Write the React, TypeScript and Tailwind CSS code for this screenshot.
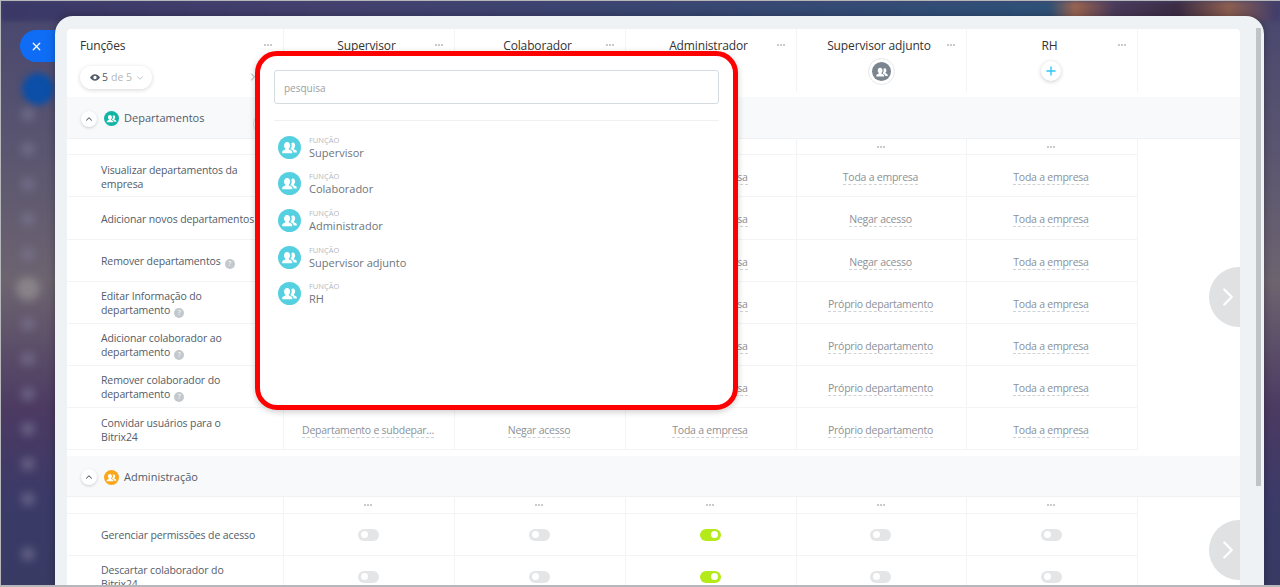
import React from "react";
import { ChevronDown, ChevronRight, ChevronUp, Plus, X } from "lucide-react";

const roles = ["Supervisor", "Colaborador", "Administrador", "Supervisor adjunto", "RH"];
const gridCols = "grid-cols-[217px_171px_171px_171px_170px_171px]";

type Row = { label: string[]; help?: boolean; h?: string; values: string[] };

const deptRows: Row[] = [
  { label: ["Visualizar departamentos da", "empresa"], values: ["Toda a empresa", "Toda a empresa", "Toda a empresa", "Toda a empresa", "Toda a empresa"] },
  { label: ["Adicionar novos departamentos"], h: "h-[43px]", values: ["Negar acesso", "Negar acesso", "Toda a empresa", "Negar acesso", "Toda a empresa"] },
  { label: ["Remover departamentos"], help: true, values: ["Negar acesso", "Negar acesso", "Toda a empresa", "Negar acesso", "Toda a empresa"] },
  { label: ["Editar Informação do", "departamento"], help: true, values: ["Negar acesso", "Negar acesso", "Toda a empresa", "Próprio departamento", "Toda a empresa"] },
  { label: ["Adicionar colaborador ao", "departamento"], help: true, values: ["Negar acesso", "Negar acesso", "Toda a empresa", "Próprio departamento", "Toda a empresa"] },
  { label: ["Remover colaborador do", "departamento"], help: true, values: ["Negar acesso", "Negar acesso", "Toda a empresa", "Próprio departamento", "Toda a empresa"] },
  { label: ["Convidar usuários para o", "Bitrix24"], values: ["Departamento e subdepar...", "Negar acesso", "Toda a empresa", "Próprio departamento", "Toda a empresa"] },
];

const adminRows = [
  { label: ["Gerenciar permissões de acesso"], toggles: [false, false, true, false, false] },
  { label: ["Descartar colaborador do", "Bitrix24"], toggles: [false, false, true, false, false] },
];

function UsersIcon({ className }: { className?: string }) {
  return (
    <svg viewBox="0 0 24 24" className={className} fill="white">
      <path d="M9.500 6.200c1.900 0 3.200 1.600 3.200 3.700 0 1.400-.6 2.600-1.400 3.200v1.100c1.900.6 3.600 1.400 3.600 2.500v1.300H4.400v-1.300c0-1.100 1.400-1.900 3.300-2.500v-1.100c-.9-.6-1.400-1.800-1.400-3.200 0-2.100 1.300-3.700 3.200-3.700z" />
      <path d="M15 6.600c1.700 0 2.900 1.400 2.900 3.300 0 1.200-.5 2.300-1.300 2.900v1c1.700.5 3 1.200 3 2.200v1.300h-3.200c0-1.600-1.400-2.700-3.400-3.400v-.7c.8-.7 1.300-1.900 1.300-3.300 0-.9-.2-1.700-.6-2.300.4 0 .9 0 1.300 0z" />
    </svg>
  );
}

function EyeIcon() {
  return (
    <svg viewBox="0 0 12 8" className="w-[10px] h-[7px] mr-[2px]" fill="#535c69">
      <path fillRule="evenodd" d="M6 0c2.600 0 4.700 1.800 6 4-1.300 2.200-3.400 4-6 4S1.300 6.200 0 4c1.300-2.200 3.400-4 6-4zm0 2a2 2 0 1 0 0 4 2 2 0 0 0 0-4z" />
    </svg>
  );
}

function Dots() {
  return (
    <span className="flex gap-[1px]">
      <i className="w-[2px] h-[2px] rounded-full bg-[#b4bac0]" />
      <i className="w-[2px] h-[2px] rounded-full bg-[#b4bac0]" />
      <i className="w-[2px] h-[2px] rounded-full bg-[#b4bac0]" />
    </span>
  );
}

function Help() {
  return (
    <span className="inline-flex items-center justify-center ml-[4px] w-[10px] h-[10px] rounded-full bg-[#c3c8cc] text-white text-[7px] leading-none align-[-1px]">
      ?
    </span>
  );
}

function Toggle({ on }: { on: boolean }) {
  return (
    <span className={`flex items-center w-[21px] h-[12px] rounded-full px-[3px] ${on ? "bg-[#b5ea1a] justify-end" : "bg-[#e3e5e7] justify-start"}`}>
      <i className="w-[7px] h-[7px] rounded-full bg-white" />
    </span>
  );
}

function GroupHeader({ title, color, h }: { title: string; color: string; h: string }) {
  return (
    <div className={`flex items-center ${h} pl-[14px] pt-[2px] bg-[#f7f9fa] border-b border-[#eff1f3]`}>
      <span className="flex items-center justify-center w-[16px] h-[16px] rounded-full bg-white shadow-[0_1px_3px_rgba(0,0,0,0.18)]">
        <ChevronUp size={10} strokeWidth={2.5} className="text-[#535c69]" />
      </span>
      <span className={`flex items-center justify-center ml-[7px] w-[15px] h-[15px] rounded-full ${color}`}>
        <UsersIcon className="w-[15px] h-[15px]" />
      </span>
      <span className="ml-[5px] text-[11px] text-[#535c69]">{title}</span>
    </div>
  );
}

function DotsRow({ h }: { h: string }) {
  return (
    <div className={`grid ${gridCols} ${h}`}>
      <div className="border-b border-r border-[#f2f4f6]" />
      {roles.map((r) => (
        <div key={r} className="flex items-center justify-center pr-[2px] border-b border-r border-[#f2f4f6]">
          <Dots />
        </div>
      ))}
    </div>
  );
}

function LabelCell({ label, help, shift }: { label: string[]; help?: boolean; shift?: boolean }) {
  return (
    <div className={`flex items-center pl-[34px] border-b border-r border-[#f2f4f6] ${shift ? "pt-[2px]" : ""}`}>
      <p className="text-[10.500px] tracking-[-0.12px] leading-[14px] text-[#535c69] whitespace-nowrap">
        {label.map((l, i) => (
          <span key={l} className="block">
            {l}
            {help && i === label.length - 1 && <Help />}
          </span>
        ))}
      </p>
    </div>
  );
}

function Header() {
  return (
    <div className={`grid ${gridCols} h-[68px]`}>
      <div className="relative h-[63px] pl-[13px] pt-[8px] border-r border-[#f2f4f6]">
        <p className="text-[12px] tracking-[-0.14px] leading-[18px] text-[#333]">Funções</p>
        <span className="mt-[11px] flex items-center w-[72px] h-[23px] pl-[10px] rounded-full bg-white shadow-[0_1px_4px_rgba(0,0,0,0.16)] text-[10.500px] text-[#b3b8bd]">
          <EyeIcon />
          <span className="text-[#535c69] mr-[3px]">5</span>
          de 5
          <ChevronDown size={10} className="ml-[3px]" />
        </span>
        <span className="absolute right-[11px] top-[15px]"><Dots /></span>
        <ChevronRight size={12} className="absolute right-[24px] top-[42px] text-[#9aa1a8]" />
      </div>
      {roles.map((r, i) => (
        <div key={r} className="relative flex flex-col items-center h-[63px] pt-[8px] pr-[5px] border-r border-[#f2f4f6]">
          <p className="text-[12px] tracking-[-0.14px] leading-[18px] text-[#333]">{r}</p>
          <span className="absolute right-[11px] top-[15px]"><Dots /></span>
          {i === 3 && (
            <span className="mt-[3px] ml-[5px] flex items-center justify-center w-[27px] h-[27px] rounded-full border border-[#e4e7e9] bg-white">
              <span className="flex items-center justify-center w-[19px] h-[19px] rounded-full bg-[#7a8590]">
                <UsersIcon className="w-[18px] h-[18px]" />
              </span>
            </span>
          )}
          {i === 4 && (
            <span className="mt-[6px] ml-[3px] flex items-center justify-center w-[20px] h-[20px] rounded-full bg-white shadow-[0_1px_4px_rgba(0,0,0,0.2)]">
              <Plus size={14} strokeWidth={2.4} className="text-[#2fc6f6]" />
            </span>
          )}
        </div>
      ))}
      <div className="flex justify-end pt-[19px] pr-[5px]">
        <span className="flex items-center justify-center w-[26px] h-[26px] rounded-full border border-[#d5d9dc]">
          <Plus size={13} strokeWidth={1.8} className="text-[#a3a9af]" />
        </span>
      </div>
    </div>
  );
}

function SearchPopup() {
  return (
    <div className="absolute left-[254px] top-[50px] w-[483px] h-[359px] rounded-[22px] border-[5px] border-[#ff0000] bg-white shadow-[0_2px_6px_rgba(0,0,0,0.2)] px-[14px] pt-[14px]">
      <div className="flex items-center h-[34px] pl-[9px] pt-[2px] rounded-[3px] border border-[#d5dcdf] text-[10px] text-[#9a9fa5]">pesquisa</div>
      <div className="mt-[16px] mb-[8px] border-t border-[#eef0f2]" />
      {roles.map((r) => (
        <div key={r} className="flex items-center h-[36.600px] pl-[4px]">
          <span className="flex items-center justify-center w-[23px] h-[23px] rounded-full bg-[#55d0e0]">
            <UsersIcon className="w-[23px] h-[23px]" />
          </span>
          <div className="ml-[8px] mt-[2px]">
            <p className="text-[7.500px] leading-[9px] text-[#b4b8bd]">FUNÇÃO</p>
            <p className="text-[11px] leading-[16px] text-[#6e757c]">{r}</p>
          </div>
        </div>
      ))}
    </div>
  );
}

function NextArrow({ top }: { top: string }) {
  return (
    <div className={`absolute ${top} right-[-30px] flex items-center justify-start pl-[4px] w-[61px] h-[60px] rounded-full bg-[#dfe1e3]`}>
      <ChevronRight size={30} strokeWidth={1.800} className="text-white" />
    </div>
  );
}

export default function App() {
  const spots = ["115", "150", "185", "220", "255", "290", "325", "360", "395", "430", "465", "500"];

  return (
    <div className="relative h-screen w-full overflow-hidden box-border border-t border-l border-b-2 border-[#b5b7ba] bg-[linear-gradient(180deg,#47466e_0%,#5a5570_25%,#6d6470_48%,#4c3a62_70%,#3b3a68_85%,#383a64_100%)] [font-family:'Open_Sans',sans-serif]">
      {/* blurred wallpaper behind the slider */}
      <div className="absolute left-0 top-0 w-full h-[20px] blur-[2px] bg-[linear-gradient(90deg,#3a3866_0%,#43406e_25%,#3b4470_45%,#2f5078_80%,#2f5075_82%,#9a6450_84%,#4a3a5a_87%,#3b2c44_92%,#8d5f50_96%,#3d3b6c_100%)]" />
      <div className="absolute left-[21px] top-[72px] w-[32px] h-[32px] rounded-full bg-[#0b4fa8] blur-[3px]" />
      <div className="absolute left-[20px] top-[106px] flex flex-col gap-[21px] w-[14px] blur-[4px]">
        {spots.map((s) => (
          <i key={s} className={`block shrink-0 w-[14px] h-[14px] rounded-full ${s === "290" ? "bg-[#a8a6a4] scale-[1.700] opacity-50" : "bg-[#7d7a98] opacity-60"}`} />
        ))}
        <i className="block shrink-0 mt-[20px] w-[14px] h-[14px] rounded-full bg-[#7d7a98] opacity-60" />
      </div>

      {/* close tab */}
      <div className="absolute left-[19px] top-[29px] flex items-center pl-[10px] w-[40px] h-[32px] rounded-l-full bg-[#0f6df5]">
        <X size={13} strokeWidth={2.2} className="text-white" />
      </div>

      <div className="relative pl-[54px] pt-[15px]">
        <div className="relative w-[1209px] h-[590px] pl-[12px] pt-[13px] rounded-t-[18px] bg-[#eef2f4] shadow-[0_0_8px_rgba(0,0,0,0.3)]">
          <div className="relative w-[1173px] h-[600px] overflow-hidden rounded-t-[4px] bg-white">
            <Header />

            <GroupHeader title="Departamentos" color="bg-[#12b5a5]" h="h-[42px]" />
            <DotsRow h="h-[16px]" />
            {deptRows.map((row) => (
              <div key={row.label[0]} className={`grid ${gridCols} ${row.h ?? "h-[42px]"}`}>
                <LabelCell label={row.label} help={row.help} shift />
                {row.values.map((v, i) => (
                  <div key={i} className="flex items-center justify-center pt-[3px] pr-[2px] border-b border-r border-[#f2f4f6]">
                    <span className="text-[10.500px] tracking-[-0.24px] leading-[14px] text-[#8b9197] border-b border-dashed border-[#cfd2d6]">{v}</span>
                  </div>
                ))}
              </div>
            ))}
            <div className="h-[6px]" />

            <GroupHeader title="Administração" color="bg-[#fba61b]" h="h-[41px]" />
            <DotsRow h="h-[17px]" />
            {adminRows.map((row) => (
              <div key={row.label[0]} className={`grid ${gridCols} h-[42px]`}>
                <LabelCell label={row.label} />
                {row.toggles.map((on, i) => (
                  <div key={i} className="flex items-center justify-center pr-[2px] border-b border-r border-[#f2f4f6]">
                    <Toggle on={on} />
                  </div>
                ))}
              </div>
            ))}

            <NextArrow top="top-[238px]" />
            <NextArrow top="top-[491px]" />
          </div>

          {/* scrollbar */}
          <div className="absolute right-[3px] top-[12px] w-[5px] h-[458px] bg-[#bfc5c6]" />
        </div>
      </div>

      <SearchPopup />
    </div>
  );
}
